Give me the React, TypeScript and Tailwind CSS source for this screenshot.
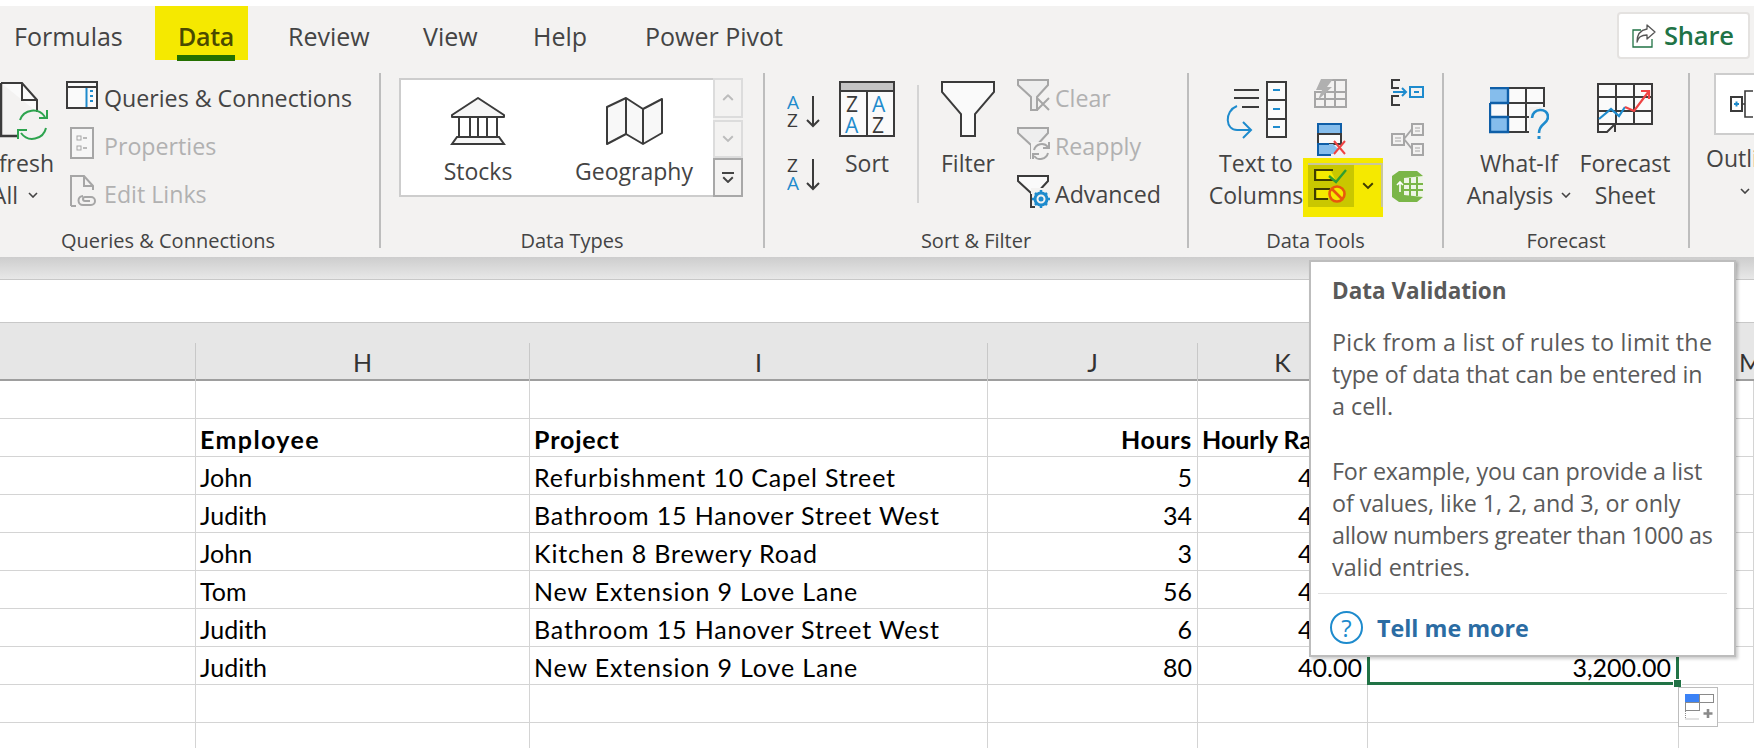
import React from "react";

const DARK = "#3b3b3b";
const BLUE = "#1e8bcd";
const NAVY = "#0f5fa8";
const GRAY = "#a6a6a6";

function Chevron({ color = "#444", w = 10 }: { color?: string; w?: number }) {
  return (
    <svg width={w} height={w * 0.6} viewBox="0 0 10 6" className="shrink-0">
      <path d="M1 1l4 4 4-4" fill="none" stroke={color} strokeWidth="1.6" />
    </svg>
  );
}

function RefreshIcon() {
  return (
    <svg width="50" height="60" viewBox="0 0 50 60" className="block">
      <path d="M1 2H22L37 19V31" fill="#fafafa" stroke={DARK} strokeWidth="2" />
      <path d="M22 2V19H37" fill="none" stroke={DARK} strokeWidth="2" />
      <path d="M1 2V55H17" fill="none" stroke={DARK} strokeWidth="2.5" />
      <path d="M20 39a14 14 0 0 1 25-3" fill="none" stroke="#2ea44f" strokeWidth="2" />
      <path d="M47 29v8h-8" fill="none" stroke="#2ea44f" strokeWidth="2" />
      <path d="M46 47a14 14 0 0 1-25 5" fill="none" stroke="#2ea44f" strokeWidth="2" />
      <path d="M18 58v-9h9" fill="none" stroke="#2ea44f" strokeWidth="2" />
    </svg>
  );
}

function QueriesIcon() {
  return (
    <svg width="32" height="28" viewBox="0 0 32 28" className="block">
      <rect x="1" y="1" width="30" height="26" fill="#fafafa" stroke={DARK} strokeWidth="2" />
      <path d="M1 6H31" stroke={DARK} strokeWidth="2" />
      <path d="M20.5 7V26" stroke={BLUE} strokeWidth="2" />
      <path d="M24 10h3M24 15h3M24 20h3" stroke={BLUE} strokeWidth="2" />
    </svg>
  );
}

function PropertiesIcon() {
  return (
    <svg width="24" height="32" viewBox="0 0 24 32" className="block">
      <rect x="1" y="1" width="22" height="30" fill="#f6f6f6" stroke={GRAY} strokeWidth="2" />
      <rect x="7" y="9" width="4" height="4" fill="none" stroke={GRAY} />
      <rect x="7" y="19" width="4" height="4" fill="none" stroke={GRAY} />
      <path d="M13 11h4M13 21h4" stroke={GRAY} strokeWidth="1.5" />
    </svg>
  );
}

function EditLinksIcon() {
  return (
    <svg width="30" height="33" viewBox="0 0 30 33" className="block">
      <path d="M1 31V1H14L23 11V15M14 1V11H23" fill="none" stroke={GRAY} strokeWidth="2" />
      <path d="M1 31H6" stroke={GRAY} strokeWidth="2" />
      <path d="M13 21a4.500 4.500 0 1 0 0 9h8a4 4 0 0 0 0-8h-6a2 2 0 0 0 0 4h5" fill="none" stroke={GRAY} strokeWidth="2" />
    </svg>
  );
}

function StocksIcon() {
  return (
    <svg width="56" height="48" viewBox="0 0 56 48" className="block">
      <path d="M28 1L54 18V20H2V18Z" fill="#f6f6f6" stroke={DARK} strokeWidth="2" strokeLinejoin="round" />
      <path d="M9 20V40M20 20V40M28 20V40M37 20V40M47 20V40" stroke={DARK} strokeWidth="2" />
      <path d="M7 40H49L54 47H2Z" fill="#f6f6f6" stroke={DARK} strokeWidth="2" />
    </svg>
  );
}

function MapIcon() {
  return (
    <svg width="57" height="48" viewBox="0 0 57 48" className="block">
      <path d="M1 10L20 1L37 12L56 2V36L37 47L20 37L1 47Z" fill="#f8f8f8" stroke={DARK} strokeWidth="2" strokeLinejoin="round" />
      <path d="M20 1V37M37 12V47" stroke={DARK} strokeWidth="2" />
    </svg>
  );
}

function SortAZIcon({ flip = false }: { flip?: boolean }) {
  return (
    <svg width="33" height="33" viewBox="0 0 33 33" className="block" style={{ fontFamily: "'Open Sans',sans-serif" }}>
      <text x="0" y="14" fontSize="19" fill={flip ? DARK : BLUE}>{flip ? "Z" : "A"}</text>
      <text x="0" y="32" fontSize="19" fill={flip ? BLUE : DARK}>{flip ? "A" : "Z"}</text>
      <path d="M26 1V31M20 25l6 6 6-6" fill="none" stroke={DARK} strokeWidth="2" />
    </svg>
  );
}

function SortIcon() {
  return (
    <svg width="56" height="56" viewBox="0 0 56 56" className="block" style={{ fontFamily: "'Open Sans',sans-serif" }}>
      <rect x="1" y="1" width="54" height="54" fill="#fafafa" stroke={DARK} strokeWidth="2" />
      <rect x="2" y="2" width="52" height="8" fill="#c4c4c4" />
      <path d="M1 10H55M28 10V55" stroke={DARK} strokeWidth="2" />
      <text x="7" y="31" fontSize="21" fill={DARK}>Z</text>
      <text x="33" y="31" fontSize="21" fill={BLUE}>A</text>
      <text x="6" y="52" fontSize="21" fill={BLUE}>A</text>
      <text x="33" y="52" fontSize="21" fill={DARK}>Z</text>
    </svg>
  );
}

function FilterIcon() {
  return (
    <svg width="54" height="56" viewBox="0 0 54 56" className="block">
      <path d="M1 1H53V11L34 33V55H20V33L1 11Z" fill="#fafafa" stroke={DARK} strokeWidth="2" />
    </svg>
  );
}

function SmallFunnel({ color }: { color: string }) {
  return (
    <path d="M1 1H31V6L20 18V31H14V18L1 6Z" fill={color === DARK ? "#fafafa" : "#eeeeee"} stroke={color} strokeWidth="2" />
  );
}

function ClearIcon() {
  return (
    <svg width="34" height="33" viewBox="0 0 34 33" className="block">
      <SmallFunnel color={GRAY} />
      <path d="M20 19l12 12M32 19L20 31" stroke={GRAY} strokeWidth="2" />
    </svg>
  );
}

function ReapplyIcon() {
  return (
    <svg width="34" height="33" viewBox="0 0 34 33" className="block">
      <SmallFunnel color={GRAY} />
      <rect x="14" y="15" width="20" height="18" fill="#f3f2f1" />
      <path d="M17 23a8 8 0 0 1 14-3M31 26a8 8 0 0 1-14 3" fill="none" stroke={GRAY} strokeWidth="2" />
      <path d="M32 15v6h-6M16 32v-5h6" fill="none" stroke={GRAY} strokeWidth="2" />
    </svg>
  );
}

function AdvancedIcon() {
  return (
    <svg width="34" height="34" viewBox="0 0 34 34" className="block">
      <SmallFunnel color={DARK} />
      <rect x="14" y="13" width="20" height="21" fill="#f3f2f1" />
      <path d="M14 19V32H18" fill="none" stroke={DARK} strokeWidth="2" />
      <circle cx="24" cy="24" r="6" fill="none" stroke={BLUE} strokeWidth="3" />
      <circle cx="24" cy="24" r="2.5" fill={BLUE} />
      <path d="M24 15v3M24 30v3M15 24h3M30 24h3M18 18l2 2M28 28l2 2M30 18l-2 2M20 28l-2 2" stroke={BLUE} strokeWidth="2.5" />
    </svg>
  );
}

function TextToColumnsIcon() {
  return (
    <svg width="62" height="60" viewBox="0 0 62 60" className="block">
      <path d="M8 9H33M8 17H33M16 26H33" stroke={DARK} strokeWidth="2" />
      <rect x="41" y="1" width="19" height="55" fill="#fafafa" stroke={DARK} strokeWidth="2" />
      <path d="M41 19H60M41 38H60" stroke={DARK} strokeWidth="2" />
      <path d="M47 9h7M47 28h7M47 46h7" stroke={BLUE} strokeWidth="2" />
      <path d="M11 25C-2 30 -1 50 12 49H25" fill="none" stroke={BLUE} strokeWidth="2" />
      <path d="M17 41l8 8-8 8" fill="none" stroke={BLUE} strokeWidth="2" />
    </svg>
  );
}

function FlashFillIcon() {
  return (
    <svg width="33" height="29" viewBox="0 0 33 29" className="block">
      <path d="M14 1H32V28H1V13H32M21 1V28M11 13V28M1 20H32" fill="none" stroke={GRAY} strokeWidth="2" />
      <path d="M7 0H19L13 8H18L4 21L8 11H2Z" fill="#b0b0b0" />
    </svg>
  );
}

function RemoveDupIcon() {
  return (
    <svg width="30" height="33" viewBox="0 0 30 33" className="block">
      <rect x="1" y="1" width="23" height="10" fill="#85bdec" stroke={NAVY} strokeWidth="2" />
      <rect x="1" y="11" width="23" height="10" fill="#fafafa" stroke={DARK} strokeWidth="2" />
      <path d="M2 21H16L21 26L16 31H2Z" fill="#85bdec" />
      <path d="M1 20V32H14M1 21H12" fill="none" stroke={NAVY} strokeWidth="2" />
      <path d="M17 18l11 13M28 18L17 31" stroke="#ef4444" strokeWidth="2" />
    </svg>
  );
}

function DataValidationIcon() {
  return (
    <svg width="34" height="36" viewBox="0 0 34 36" className="block">
      <path d="M19 2H1V12H19" fill="none" stroke="#3f3c00" strokeWidth="2" />
      <path d="M3 3H17L21 11H3Z" fill="#f5e900" />
      <path d="M15 8l7 6L32 2" fill="none" stroke="#2f9e2f" strokeWidth="2.4" />
      <path d="M16 21H1V31H14" fill="none" stroke="#3f3c00" strokeWidth="2" />
      <rect x="3" y="22" width="12" height="8" fill="#f5e900" />
      <circle cx="23" cy="26" r="7.5" fill="#f5e900" stroke="#e8580c" strokeWidth="2.6" />
      <path d="M18 21l10 10" stroke="#e8580c" strokeWidth="2.6" />
    </svg>
  );
}

function ConsolidateIcon() {
  return (
    <svg width="33" height="27" viewBox="0 0 33 27" className="block">
      <path d="M9 1H1V9H8M8 17H1V26H9" fill="none" stroke={DARK} strokeWidth="2" />
      <path d="M2 13H15M11 9l4 4-4 4" fill="none" stroke={BLUE} strokeWidth="2" />
      <rect x="19" y="8" width="13" height="10" fill="none" stroke={BLUE} strokeWidth="2" />
      <path d="M23 13h5" stroke={BLUE} strokeWidth="2" />
    </svg>
  );
}

function RelationshipsIcon() {
  return (
    <svg width="33" height="33" viewBox="0 0 33 33" className="block">
      <g fill="none" stroke={GRAY} strokeWidth="2">
        <rect x="1" y="11" width="12" height="11" />
        <rect x="21" y="1" width="11" height="11" />
        <rect x="21" y="21" width="11" height="11" />
        <path d="M13 16l8-10M13 16l8 10" />
      </g>
      <path d="M4 15h6M4 18h6M24 5h5M24 8h5M24 25h5M24 28h5" stroke={GRAY} />
    </svg>
  );
}

function ManageModelIcon() {
  return (
    <svg width="33" height="33" viewBox="0 0 33 33" className="block">
      <path d="M8 1H26L32 6V27L26 32H8L1 27V6Z" fill="#7ab648" />
      <path d="M13 8L32 6V27L13 25Z" fill="#eef5e6" />
      <path d="M19 8V26M26 7V26M13 14H32M13 20H32" stroke="#7ab648" strokeWidth="2" />
      <path d="M9 12V22M6 15l3-3 3 3" fill="none" stroke="#fff" strokeWidth="1.6" />
    </svg>
  );
}

function WhatIfIcon() {
  return (
    <svg width="60" height="54" viewBox="0 0 60 54" className="block">
      <rect x="1" y="1" width="54" height="44" fill="#fafafa" />
      <rect x="1" y="1" width="18" height="15" fill="#85bdec" />
      <rect x="1" y="30" width="18" height="15" fill="#85bdec" />
      <path d="M19 1H55V22M19 16H55M19 30H42M19 45H46M19 1V45M37 1V45" fill="none" stroke={DARK} strokeWidth="2" />
      <path d="M1 1H19V16H1M1 16V30M1 30H19V45H1Z" fill="none" stroke={NAVY} strokeWidth="2.4" />
      <rect x="40" y="20" width="20" height="34" fill="#f3f2f1" />
      <path d="M43 31C43 21 59 20 59 30C59 37 50 36 50 46" fill="none" stroke={BLUE} strokeWidth="2.6" />
      <rect x="48.5" y="49" width="3" height="3" fill={BLUE} />
    </svg>
  );
}

function ForecastIcon() {
  return (
    <svg width="56" height="52" viewBox="0 0 56 52" className="block">
      <path d="M1 1H55V41H18L10 49H1Z" fill="#fafafa" stroke={DARK} strokeWidth="2" />
      <path d="M1 14H55M1 28H55M19 1V41M37 1V41M1 41H18V49" fill="none" stroke={DARK} strokeWidth="2" />
      <path d="M2 36L14 26L22 33L28 24" fill="none" stroke={BLUE} strokeWidth="2.2" />
      <path d="M28 24L37 28L52 8M44 8H52V16" fill="none" stroke="#ef4444" strokeWidth="2.2" />
    </svg>
  );
}

function OutlineIcon() {
  return (
    <svg width="40" height="28" viewBox="0 0 40 28" className="block">
      <rect x="1" y="7" width="11" height="14" fill="none" stroke={DARK} strokeWidth="2" />
      <path d="M4 14h5M6.500 11.500v5" stroke={BLUE} strokeWidth="2" />
      <path d="M23 1H15V27H23M15 14H12M26 1H40M26 27H40M26 14H40" fill="none" stroke={DARK} strokeWidth="1.6" />
    </svg>
  );
}

function ShareIcon() {
  return (
    <svg width="24" height="24" viewBox="0 0 24 24" className="block">
      <path d="M9 6H1V23H20V15" fill="none" stroke="#217346" strokeWidth="1.3" />
      <path d="M15 1L23 8L15 15V11C9 11 6 13 5 18C5 10 9 6 15 5Z" fill="none" stroke="#555" strokeWidth="1.3" strokeLinejoin="round" />
    </svg>
  );
}

function AutofillIcon() {
  return (
    <svg width="30" height="28" viewBox="0 0 30 28" className="block">
      <rect x="0.500" y="0.500" width="14" height="8" fill="#3b82f6" stroke="#3b82f6" />
      <rect x="14.500" y="0.500" width="14" height="8" fill="#fff" stroke="#8a8a8a" />
      <rect x="0.500" y="8.500" width="14" height="8" fill="#fff" stroke="#8a8a8a" />
      <path d="M0.500 17v8h14" fill="none" stroke="#8a8a8a" strokeDasharray="1 1" />
      <path d="M23 15v9M18.500 19.500h9" stroke="#8a8a8a" strokeWidth="2.6" />
    </svg>
  );
}

function SmallRow({ icon, label, disabled, iconPad = "pt-[5px]" }: { icon: React.ReactNode; label: string; disabled?: boolean; iconPad?: string }) {
  return (
    <div className="flex h-[48px] items-center">
      <div className={`w-[38px] shrink-0 self-start ${iconPad}`}>{icon}</div>
      <span className={`whitespace-nowrap text-[23.200px] ${disabled ? "text-[#b1b1b1]" : "text-[#444]"}`}>{label}</span>
    </div>
  );
}

function BigLabel({ children }: { children: React.ReactNode }) {
  return <div className="flex h-[32px] items-center justify-center gap-[8px] whitespace-nowrap text-[23px] leading-[32px] text-[#444]">{children}</div>;
}

function Group({ width, label, labelBox, children, last }: { width: string; label?: string; labelBox?: string; children: React.ReactNode; last?: boolean }) {
  return (
    <div className={`flex h-[175px] shrink-0 flex-col ${width} ${last ? "" : "border-r-2 border-[#bdbdbd]"}`}>
      <div className="flex h-[156px] shrink-0">{children}</div>
      {label && <div className={`h-[24px] shrink-0 whitespace-nowrap text-center text-[20px] leading-[24px] text-[#444] ${labelBox ?? ""}`}>{label}</div>}
    </div>
  );
}

const rows = [
  ["John", "Refurbishment 10 Capel Street", "5", "40.00"],
  ["Judith", "Bathroom 15 Hanover Street West", "34", "40.00"],
  ["John", "Kitchen 8 Brewery Road", "3", "40.00"],
  ["Tom", "New Extension 9 Love Lane", "56", "40.00"],
  ["Judith", "Bathroom 15 Hanover Street West", "6", "40.00"],
  ["Judith", "New Extension 9 Love Lane", "80", "40.00", "3,200.00"],
];

const colClass = "grid grid-cols-[196px_334px_458px_210px_170px_311px_1fr]";
const cell = "h-[38px] whitespace-nowrap border-b border-r border-[#d4d4d4] leading-[40px]";

function Row({ values, bold, selected }: { values?: string[]; bold?: boolean; selected?: boolean }) {
  return (
    <div className={`${colClass} ${bold ? "font-bold" : ""}`}>
      <div className={cell} />
      <div className={`${cell} pl-[4px] ${bold ? "tracking-[1.400px]" : ""}`}>{values?.[0]}</div>
      <div className={`${cell} pl-[4px] tracking-[0.850px]`}>{values?.[1]}</div>
      <div className={`${cell} pr-[5px] text-right ${bold ? "tracking-[0.700px]" : ""}`}>{values?.[2]}</div>
      <div className={`${cell} ${bold ? "pl-[4px]" : "pr-[5px] text-right"}`}>{values?.[3]}</div>
      {selected ? (
        <div className="relative -ml-[1px] -mt-[1px] h-[39px] border-x-[3px] border-b-[3px] border-[#217346] pr-[5px] text-right leading-[42px]">
          {values?.[4]}
          <div className="absolute -bottom-[6px] -right-[6px] h-[9px] w-[9px] border border-white bg-[#217346]" />
        </div>
      ) : (
        <div className={cell} />
      )}
      <div className={cell} />
    </div>
  );
}

export default function App() {
  const tab = "text-[25px] leading-[34px] text-[#444]";
  return (
    <div className="relative h-[748px] w-[1754px] overflow-hidden bg-white [font-family:'Open_Sans',sans-serif]">
      <div className="h-[6px] bg-white" />

      {/* Ribbon */}
      <div className="h-[251px] bg-[#f3f2f1]">
        <div className="flex h-[55px] items-start">
          <div className={`ml-[14px] mt-[13px] w-[141px] ${tab}`}>Formulas</div>
          <div className="relative h-[54px] w-[93px] bg-[#f5e900] pl-[23px] pt-[13px] text-[25px] font-semibold leading-[34px] tracking-[-0.3px] text-[#4a4a00]">
            Data
            <div className="absolute bottom-[-1px] left-[22px] h-[6px] w-[58px] bg-[#237000]" />
          </div>
          <div className={`ml-[40px] mt-[13px] w-[135px] ${tab}`}>Review</div>
          <div className={`mt-[13px] w-[110px] ${tab}`}>View</div>
          <div className={`mt-[13px] w-[112px] ${tab}`}>Help</div>
          <div className={`mt-[13px] ${tab}`}>Power Pivot</div>
          <div className="ml-auto mr-[4px] mt-[6px] flex h-[47px] w-[133px] items-center rounded-[4px] border-2 border-[#e4e2e0] bg-white pl-[13px]">
            <ShareIcon />
            <span className="ml-[8px] text-[25.500px] font-semibold tracking-[-0.2px] text-[#217346]">Share</span>
          </div>
        </div>

        <div className="mt-[12px] flex">
          {/* Queries & Connections */}
          <Group width="w-[381px]" label="Queries & Connections" labelBox="w-[336px]">
            <div className="w-[66px] shrink-0 overflow-hidden pt-[8px]">
              <div className="h-[66px]"><RefreshIcon /></div>
              <div className="flex h-[32px] justify-end whitespace-nowrap pr-[12px] text-[23px] leading-[32px] text-[#444]">Refresh</div>
              <div className="flex h-[32px] items-center justify-end gap-[10px] whitespace-nowrap pr-[28px] text-[23px] leading-[32px] text-[#444]">All <Chevron /></div>
            </div>
            <div className="pt-[1px]">
              <SmallRow icon={<QueriesIcon />} label="Queries & Connections" iconPad="pt-[7px]" />
              <SmallRow icon={<div className="pl-[4px]"><PropertiesIcon /></div>} label="Properties" disabled />
              <SmallRow icon={<div className="pl-[4px]"><EditLinksIcon /></div>} label="Edit Links" disabled />
            </div>
          </Group>

          {/* Data Types */}
          <Group width="w-[384px]" label="Data Types" labelBox="w-[382px]">
            <div className="ml-[18px] mt-[5px] flex h-[119px] w-[344px] border-2 border-[#cdcdcd] bg-white">
              <div className="flex w-[154px] flex-col items-center pt-[17px]">
                <StocksIcon />
                <div className="mt-[10px]"><BigLabel>Stocks</BigLabel></div>
              </div>
              <div className="flex w-[158px] flex-col items-center pt-[17px]">
                <MapIcon />
                <div className="mt-[10px]"><BigLabel>Geography</BigLabel></div>
              </div>
              <div className="-my-[2px] -mr-[2px] flex w-[30px] flex-col bg-[#f3f2f1]">
                <div className="flex h-[40px] items-center justify-center border-2 border-[#dcdcdc]"><div className="rotate-180"><Chevron color="#bcbcbc" w={12} /></div></div>
                <div className="mt-[2px] flex h-[38px] items-center justify-center border-2 border-[#dcdcdc]"><Chevron color="#bcbcbc" w={12} /></div>
                <div className="flex h-[39px] flex-col items-center justify-center gap-[2px] border-2 border-[#a8a8a8]">
                  <div className="h-[2px] w-[12px] bg-[#444]" />
                  <Chevron w={12} />
                </div>
              </div>
            </div>
          </Group>

          {/* Sort & Filter */}
          <Group width="w-[424px]" label="Sort & Filter">
            <div className="ml-[22px] w-[33px] shrink-0 pt-[22px]">
              <SortAZIcon />
              <div className="h-[30px]" />
              <SortAZIcon flip />
            </div>
            <div className="ml-[19px] flex w-[56px] shrink-0 flex-col items-center pt-[8px]">
              <div className="h-[66px]"><SortIcon /></div>
              <BigLabel>Sort</BigLabel>
            </div>
            <div className="ml-[22px] mt-[12px] h-[118px] w-[2px] shrink-0 bg-[#d4d4d4]" />
            <div className="ml-[22px] flex w-[54px] shrink-0 flex-col items-center pt-[8px]">
              <div className="h-[66px]"><FilterIcon /></div>
              <BigLabel>Filter</BigLabel>
            </div>
            <div className="ml-[22px] pt-[1px]">
              <SmallRow icon={<ClearIcon />} label="Clear" disabled />
              <SmallRow icon={<ReapplyIcon />} label="Reapply" disabled />
              <SmallRow icon={<AdvancedIcon />} label="Advanced" />
            </div>
          </Group>

          {/* Data Tools */}
          <Group width="w-[255px]" label="Data Tools">
            <div className="ml-[10px] flex w-[114px] shrink-0 flex-col items-center pt-[8px]">
              <div className="h-[66px] pl-[2px]"><TextToColumnsIcon /></div>
              <BigLabel>Text to</BigLabel>
              <BigLabel>Columns</BigLabel>
            </div>
            <div className="w-[78px] shrink-0">
              <div className="ml-[1px] mt-[6px] h-[28px]"><FlashFillIcon /></div>
              <div className="ml-[4px] mt-[16px] h-[32px]"><RemoveDupIcon /></div>
              <div className="-ml-[10px] mt-[3px] h-[59px] w-[80px] bg-[#f5e900] pl-[5px] pt-[5px]">
                <div className="flex h-[44px] border-r-2 border-t-2 border-[#c9c79a]">
                  <div className="flex w-[46px] items-center justify-center bg-[#c9c700]"><DataValidationIcon /></div>
                  <div className="flex flex-1 items-center justify-center"><Chevron color="#3f3c00" w={12} /></div>
                </div>
              </div>
            </div>
            <div className="w-[40px] shrink-0">
              <div className="mt-[6px] h-[28px]"><ConsolidateIcon /></div>
              <div className="mt-[16px] h-[33px]"><RelationshipsIcon /></div>
              <div className="mt-[14px]"><ManageModelIcon /></div>
            </div>
          </Group>

          {/* Forecast */}
          <Group width="w-[246px]" label="Forecast">
            <div className="ml-[14px] flex w-[122px] shrink-0 flex-col items-center">
              <div className="h-[74px] pt-[14px]"><WhatIfIcon /></div>
              <BigLabel>What-If</BigLabel>
              <BigLabel>Analysis <Chevron /></BigLabel>
            </div>
            <div className="flex w-[90px] shrink-0 flex-col items-center">
              <div className="h-[74px] pt-[10px]"><ForecastIcon /></div>
              <BigLabel>Forecast</BigLabel>
              <BigLabel>Sheet</BigLabel>
            </div>
          </Group>

          {/* Outline, cut off by the window */}
          <Group width="w-[64px]" last>
            <div className="w-[64px] overflow-hidden">
              <div className="ml-[24px] flex h-[62px] w-[100px] items-center border-2 border-[#cdcdcd] bg-white pl-[14px]"><OutlineIcon /></div>
              <div className="ml-[16px] mt-[7px] whitespace-nowrap text-[23px] leading-[32px] text-[#444]">Outline</div>
              <div className="ml-[50px] mt-[14px]"><Chevron /></div>
            </div>
          </Group>
        </div>
      </div>

      {/* Ribbon shadow */}
      <div className="h-[22px] bg-gradient-to-b from-[#cdcdcd] to-[#e8e8e8]" />

      {/* Formula bar */}
      <div className="h-[44px] border-y border-[#c8c8c8] bg-white" />

      {/* Sheet, Excel's Calibri is not installed, Lato is the nearest */}
      <div className="[font-family:Lato,sans-serif] text-[25px] text-black">
        <div className="h-[20px] bg-[#e6e6e6]" />
        <div className={`${colClass} h-[38px] border-b-2 border-[#9e9e9e] bg-[#e6e6e6] text-[25px] leading-[38px] text-[#333]`}>
          <div className="border-r border-[#c8c8c8]" />
          <div className="border-r border-[#c8c8c8] text-center">H</div>
          <div className="border-r border-[#c8c8c8] text-center">I</div>
          <div className="border-r border-[#c8c8c8] text-center">J</div>
          <div className="border-r border-[#c8c8c8] text-center">K</div>
          <div className="border-r border-[#c8c8c8] text-center">L</div>
          <div className="pl-[60px]">M</div>
        </div>
        <Row />
        <Row bold values={["Employee", "Project", "Hours", "Hourly Rate"]} />
        {rows.map((r, i) => (
          <Row key={i} values={r} selected={i === rows.length - 1} />
        ))}
        <Row />
        <div className={colClass}>
          <div className="h-[26px] border-r border-[#d4d4d4]" />
          <div className="h-[26px] border-r border-[#d4d4d4]" />
          <div className="h-[26px] border-r border-[#d4d4d4]" />
          <div className="h-[26px] border-r border-[#d4d4d4]" />
          <div className="h-[26px] border-r border-[#d4d4d4]" />
          <div className="h-[26px] border-r border-[#d4d4d4]" />
        </div>
      </div>

      {/* Autofill button over the grid */}
      <div className="absolute left-[1678px] top-[687px] flex h-[40px] w-[40px] items-center justify-center border border-[#bdbdbd] bg-white pl-[4px] pt-[2px]">
        <AutofillIcon />
      </div>

      {/* Tooltip */}
      <div className="absolute left-[1309px] top-[260px] h-[397px] w-[427px] border-2 border-[#bdbdbd] bg-white text-[#5a5a5a] shadow-[2px_2px_3px_rgba(0,0,0,0.2)]">
        <div className="pl-[21px] pt-[13px] text-[22.500px] font-bold leading-[32px]">Data Validation</div>
        <div className="pl-[21px] pt-[19px] text-[23.300px] leading-[32px]">
          <p className="whitespace-nowrap tracking-[0.270px]">Pick from a list of rules to limit the</p>
          <p className="whitespace-nowrap tracking-[-0.140px]">type of data that can be entered in</p>
          <p>a cell.</p>
          <p className="mt-[33px] whitespace-nowrap tracking-[-0.170px]">For example, you can provide a list</p>
          <p className="whitespace-nowrap tracking-[-0.080px]">of values, like 1, 2, and 3, or only</p>
          <p className="whitespace-nowrap tracking-[-0.320px]">allow numbers greater than 1000 as</p>
          <p>valid entries.</p>
        </div>
        <div className="mx-[7px] mt-[10px] h-px bg-[#e1e1e1]" />
        <div className="flex items-center pl-[19px] pt-[17px]">
          <div className="flex h-[33px] w-[33px] items-center justify-center rounded-full border-2 border-[#1e8bcd] text-[24px] text-[#1e8bcd]">?</div>
          <span className="ml-[14px] text-[23.300px] font-bold leading-[32px] text-[#2b6ca3]">Tell me more</span>
        </div>
      </div>
    </div>
  );
}
